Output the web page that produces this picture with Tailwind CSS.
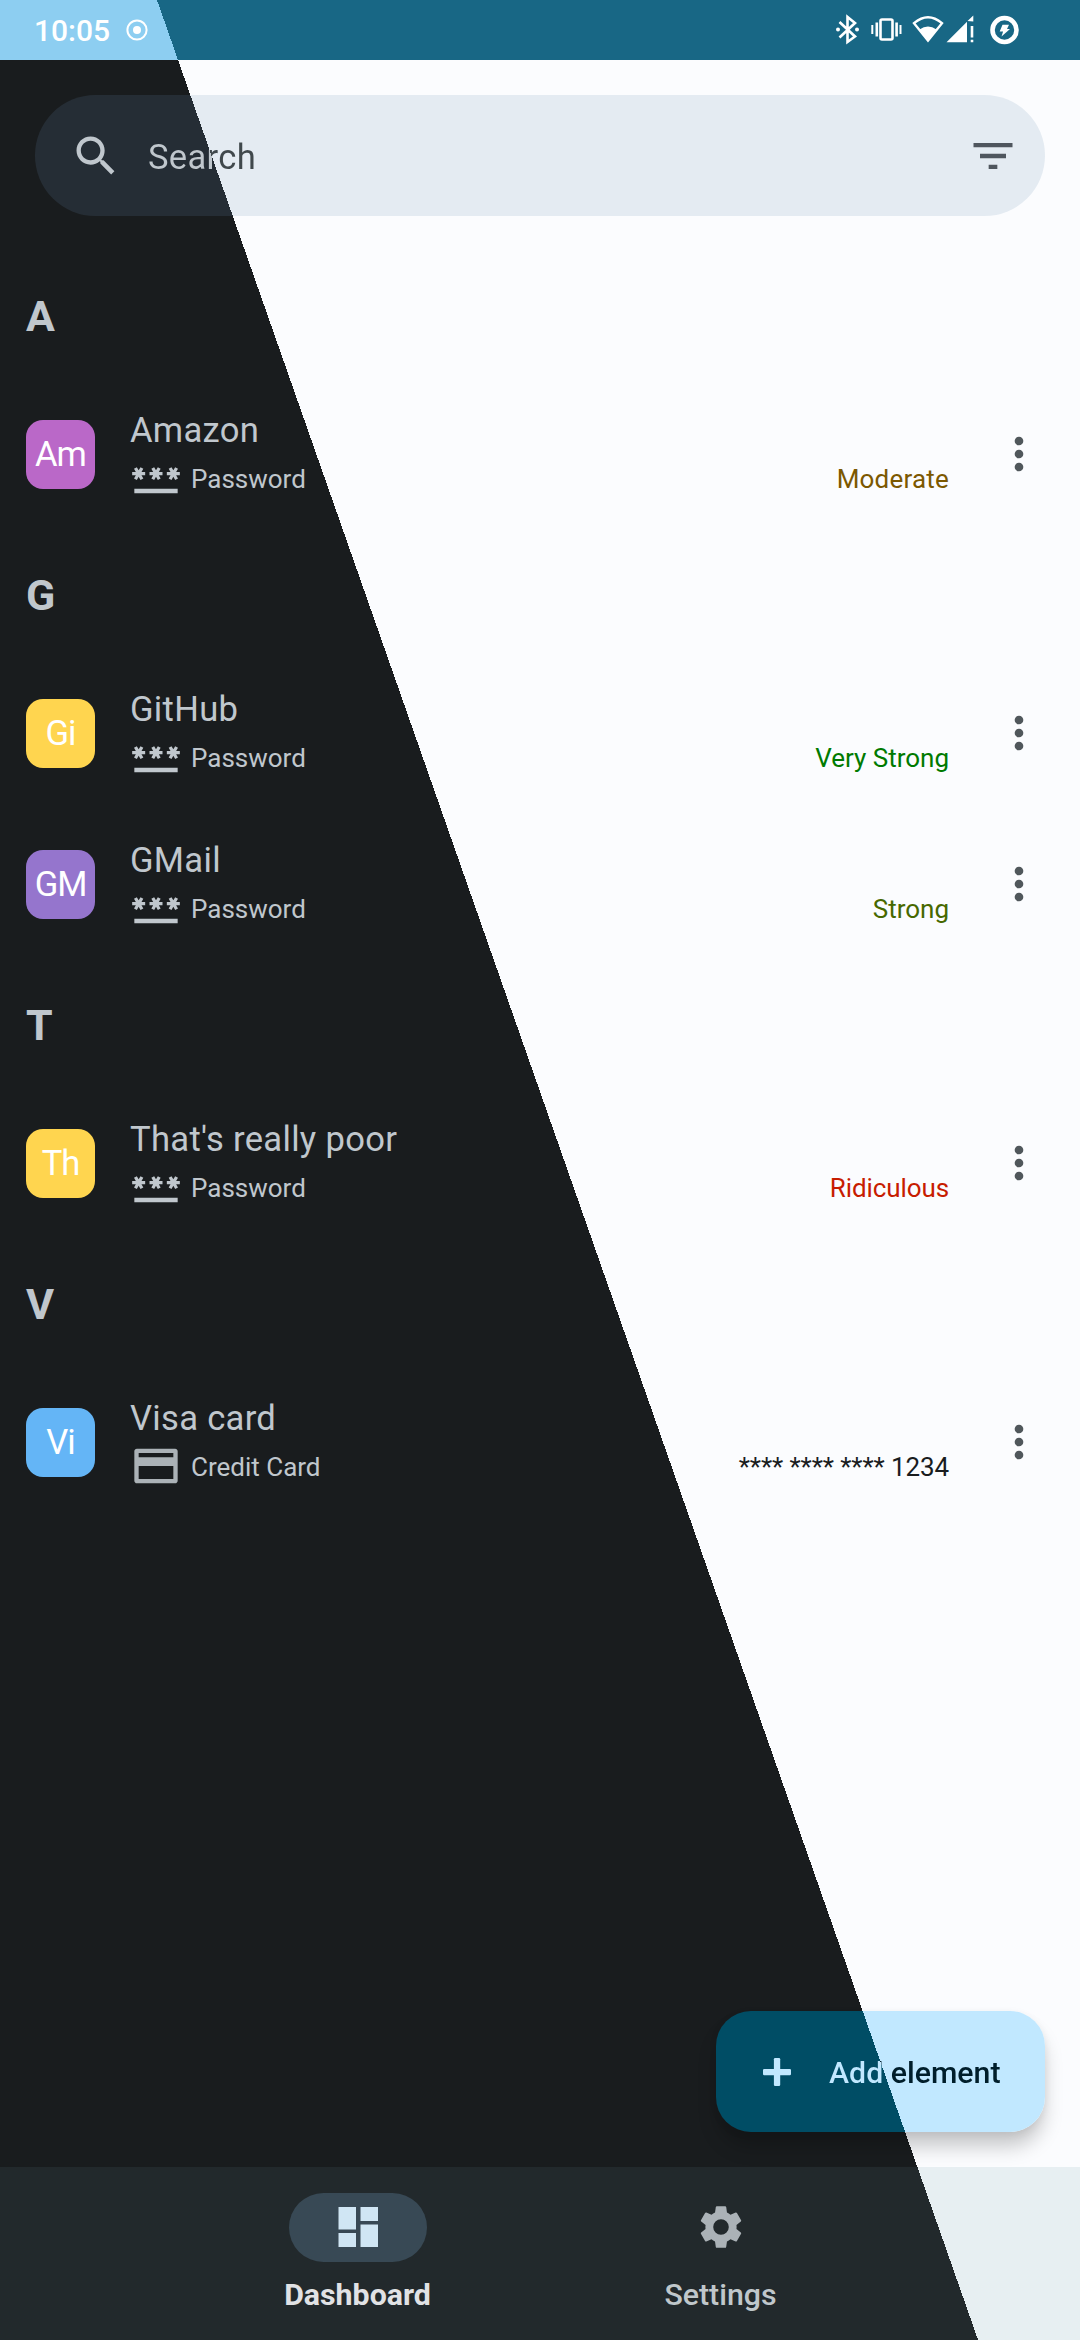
<!DOCTYPE html>
<html lang="en">
<head>
<meta charset="utf-8">
<title>Passwords</title>
<script src="https://cdn.jsdelivr.net/npm/@tailwindcss/browser@4"></script>
</head>
<body class="w-[1080px] h-[2340px] overflow-hidden font-['Roboto',sans-serif]">
<svg class="hidden">
  <symbol id="password" viewBox="0 0 24 24"><path d="M2,17h20v2H2V17z M3.15,12.95L4,11.47l0.85,1.48l1.3-0.75L5.3,10.72H7v-1.5H5.3l0.85-1.47L4.85,7L4,8.47L3.15,7l-1.3,0.75L2.7,9.22H1v1.5h1.7L1.85,12.2L3.15,12.95z M9.85,12.2l1.3,0.75L12,11.47l0.85,1.48l1.3-0.75l-0.85-1.48H15v-1.5h-1.7l0.85-1.47L12.85,7L12,8.47L11.15,7l-1.3,0.75l0.85,1.47H9v1.5h1.7L9.85,12.2z M23,9.22h-1.7l0.85-1.47L20.85,7L20,8.47L19.15,7l-1.3,0.75l0.85,1.47H17v1.5h1.7l-0.85,1.48l1.3,0.75L20,11.47l0.85,1.48l1.3-0.75l-0.85-1.48H23V9.22z"/></symbol>
  <symbol id="card" viewBox="0 0 24 24"><path d="M20.8 4H3.2C2.5 4 2 4.5 2 5.2V18.800c0 .7.5 1.200 1.200 1.200h17.600c.7 0 1.200-.5 1.200-1.200V5.200c0-.7-.5-1.200-1.200-1.200zM20 18H4v-6h16v6zm0-10H4V6h16v2z"/></symbol>
  <symbol id="more" viewBox="0 0 24 24"><circle cx="12" cy="6" r="2"/><circle cx="12" cy="12" r="2"/><circle cx="12" cy="18" r="2"/></symbol>
</svg>
<!-- Every split surface shares one viewport-fixed gradient, so the dark/light diagonal lines up everywhere. -->
<div class="flex flex-col w-full h-full bg-fixed bg-[linear-gradient(70.664deg,#191c1e_922.9px,#fbfcfe_922.9px)]">

  <header class="flex items-center h-[60px] shrink-0 pl-[34px] pr-[60px] text-white bg-fixed bg-[linear-gradient(70.664deg,#8dcef1_922.9px,#186785_922.9px)]">
    <span class="pt-px text-[30px] leading-[60px] font-medium">10:05</span>
    <svg class="w-[24px] h-[24px] ml-[15px]" viewBox="0 0 24 24"><circle cx="12" cy="12" r="9.600" fill="none" stroke="white" stroke-width="2"/><circle cx="12" cy="12" r="4" fill="white"/></svg>
    <svg class="w-[188px] h-[32px] ml-auto" viewBox="832 14 188 32" fill="white">
      <path d="M839.500 22L855 36.500L847.500 42V17L855 23L839.500 37.500" fill="none" stroke="white" stroke-width="2.600"/><circle cx="838" cy="29.500" r="2"/><circle cx="857" cy="29.500" r="2"/>
      <rect x="880.500" y="19.500" width="12" height="20" rx="1.500" fill="none" stroke="white" stroke-width="2.600"/>
      <path d="M871.300 25h2v9h-2zM875.500 22.500h2.600v14h-2.600zM895.300 22.500h2.600v14h-2.600zM899.500 25h2v9h-2z"/>
      <path d="M914 23.200Q928 11.200 942 23.200L928 40.600z" fill="none" stroke="white" stroke-width="2.400"/><path d="M919.500 29.500Q928 23.500 936.500 29.500L928 41z"/>
      <path d="M946.500 42.300L967 21.800V42.300zM967.500 21L973.300 15.500V21.500zM970.700 26h2.600v11.500h-2.600zM970.700 39.700h2.600v2.600h-2.600z"/>
      <circle cx="1004.500" cy="30" r="12" fill="none" stroke="white" stroke-width="4.600"/>
      <path d="M1002.500 24.800h6.500l-2 4.200h3l-8.500 7.500 1.600-5h-3.400z"/>
    </svg>
  </header>

  <div class="flex items-center h-[121px] shrink-0 mt-[35px] mx-[35px] pl-[35px] pr-[26px] rounded-full bg-fixed bg-[linear-gradient(70.664deg,#252d35_922.9px,#e4ebf2_922.9px)]">
    <svg class="w-[52px] h-[52px]" viewBox="0 0 24 24" fill="#c0c7cd"><path d="M15.500 14h-.790l-.280-.270C15.410 12.590 16 11.110 16 9.500 16 5.910 13.090 3 9.500 3S3 5.910 3 9.500 5.910 16 9.500 16c1.610 0 3.090-.590 4.230-1.570l.270.280v.790l5 4.990L20.490 19l-4.990-5zm-6 0C7.010 14 5 11.990 5 9.500S7.010 5 9.500 5 14 7.010 14 9.500 11.990 14 9.500 14z"/></svg>
    <span class="ml-[26px] pt-[2px] text-[34.6px] leading-[60px] tracking-[0.300px] text-transparent bg-clip-text bg-fixed bg-[linear-gradient(70.664deg,#c0c7cd_922.9px,#40484c_922.9px)]">Search</span>
    <svg class="w-[52px] h-[52px] ml-auto" viewBox="0 0 24 24" fill="#4f565e"><path d="M10 18h4v-2h-4v2zM3 6v2h18V6H3zm3 7h12v-2H6v2z"/></svg>
  </div>

  <main class="flex flex-col grow mt-[35px] pl-[26px] pr-[35px] text-[#c0c7cd]">
    <h2 class="flex items-center h-[128px] pt-[3px] text-[43px] font-bold">A</h2>
    <div class="flex items-center h-[151px]">
      <div class="flex items-center justify-center size-[69px] rounded-[17px] bg-[#ba68c8] text-white text-[34.600px] tracking-[-1px]">Am</div>
      <div class="flex flex-col ml-[35px]">
        <div class="h-[46px] pt-px text-[34.600px] leading-[46px] tracking-[0.300px]">Amazon</div>
        <div class="flex items-center h-[52px]"><svg class="size-[52px]" fill="currentColor"><use href="#password"/></svg><span class="ml-[9px] pt-[3px] text-[26px]">Password</span></div>
      </div>
      <div class="ml-auto mt-[48px] text-[26px] leading-[52px] tracking-[0.200px] text-[#7c5800]">Moderate</div>
      <svg class="size-[52px] ml-[44px] mb-[2px] text-[#50575b]" fill="currentColor"><use href="#more"/></svg>
    </div>

    <h2 class="flex items-center h-[128px] pt-[3px] text-[43px] font-bold">G</h2>
    <div class="flex items-center h-[151px]">
      <div class="flex items-center justify-center size-[69px] rounded-[17px] bg-[#ffd54f] text-white text-[34.600px] tracking-[-1px]">Gi</div>
      <div class="flex flex-col ml-[35px]">
        <div class="h-[46px] pt-px text-[34.600px] leading-[46px] tracking-[0.300px]">GitHub</div>
        <div class="flex items-center h-[52px]"><svg class="size-[52px]" fill="currentColor"><use href="#password"/></svg><span class="ml-[9px] pt-[3px] text-[26px]">Password</span></div>
      </div>
      <div class="ml-auto mt-[48px] text-[26px] leading-[52px] text-[#007a00]">Very Strong</div>
      <svg class="size-[52px] ml-[44px] mb-[2px] text-[#50575b]" fill="currentColor"><use href="#more"/></svg>
    </div>
    <div class="flex items-center h-[151px]">
      <div class="flex items-center justify-center size-[69px] rounded-[17px] bg-[#9575cd] text-white text-[34.600px] tracking-[-1px]">GM</div>
      <div class="flex flex-col ml-[35px]">
        <div class="h-[46px] pt-px text-[34.600px] leading-[46px] tracking-[0.300px]">GMail</div>
        <div class="flex items-center h-[52px]"><svg class="size-[52px]" fill="currentColor"><use href="#password"/></svg><span class="ml-[9px] pt-[3px] text-[26px]">Password</span></div>
      </div>
      <div class="ml-auto mt-[48px] text-[26px] leading-[52px] text-[#476800]">Strong</div>
      <svg class="size-[52px] ml-[44px] mb-[2px] text-[#50575b]" fill="currentColor"><use href="#more"/></svg>
    </div>

    <h2 class="flex items-center h-[128px] pt-[3px] text-[43px] font-bold">T</h2>
    <div class="flex items-center h-[151px]">
      <div class="flex items-center justify-center size-[69px] rounded-[17px] bg-[#ffd54f] text-white text-[34.600px] tracking-[-1px]">Th</div>
      <div class="flex flex-col ml-[35px]">
        <div class="h-[46px] pt-px text-[34.600px] leading-[46px] tracking-[0.300px]">That's really poor</div>
        <div class="flex items-center h-[52px]"><svg class="size-[52px]" fill="currentColor"><use href="#password"/></svg><span class="ml-[9px] pt-[3px] text-[26px]">Password</span></div>
      </div>
      <div class="ml-auto mt-[48px] text-[26px] leading-[52px] tracking-[-0.100px] text-[#c71c00]">Ridiculous</div>
      <svg class="size-[52px] ml-[44px] mb-[2px] text-[#50575b]" fill="currentColor"><use href="#more"/></svg>
    </div>

    <h2 class="flex items-center h-[128px] pt-[3px] text-[43px] font-bold">V</h2>
    <div class="flex items-center h-[151px]">
      <div class="flex items-center justify-center size-[69px] rounded-[17px] bg-[#64b5f6] text-white text-[34.600px] tracking-[-1px]">Vi</div>
      <div class="flex flex-col ml-[35px]">
        <div class="h-[46px] pt-px text-[34.600px] leading-[46px] tracking-[0.300px]">Visa card</div>
        <div class="flex items-center h-[52px]"><svg class="size-[52px] text-[#abb2b7]" fill="currentColor"><use href="#card"/></svg><span class="ml-[9px] pt-[3px] text-[26px]">Credit Card</span></div>
      </div>
      <div class="ml-auto mt-[48px] text-[26px] leading-[52px] tracking-[-0.100px] text-[#191c1e]">**** **** **** 1234</div>
      <svg class="size-[52px] ml-[44px] mb-[2px] text-[#50575b]" fill="currentColor"><use href="#more"/></svg>
    </div>

    <button class="flex items-center self-end w-[329px] h-[121px] mt-auto mb-[35px] pl-[47px] rounded-[35px] shadow-[0_16px_20px_-2px_rgb(0_0_0/0.22),0_2px_8px_rgb(0_0_0/0.06)] bg-fixed bg-[linear-gradient(70.664deg,#004d65_922.9px,#c1e8ff_922.9px)]">
      <svg class="size-[28px]" viewBox="0 0 28 28" fill="#c1e8ff"><rect x="10.900" y="0" width="6.300" height="28" rx="1.200"/><rect x="0" y="10.900" width="28" height="6.300" rx="1.200"/></svg>
      <span class="ml-[38px] pt-[2px] text-[30.300px] leading-[52px] font-medium text-transparent bg-clip-text bg-fixed bg-[linear-gradient(70.664deg,#c1e8ff_922.9px,#001e2b_922.9px)]">Add element</span>
    </button>
  </main>

  <nav class="flex h-[173px] shrink-0 pt-[26px] pl-[176px] bg-fixed bg-[linear-gradient(70.664deg,#22292c_922.9px,#e7eff2_922.9px)]">
    <div class="flex flex-col items-center w-[363px]">
      <div class="flex items-center justify-center w-[138px] h-[69px] rounded-full bg-[#384955]">
        <svg class="w-[40px] h-[40px] mb-px" viewBox="0 0 40 40" fill="#d0e6f4"><path d="M.5 0h17.500v22.500H.5zM22.500 0h17.500v14H22.500zM.5 26h17.500v14H.5zM22.500 17.500h17.500V40H22.500z"/></svg>
      </div>
      <span class="mt-[15px] text-[30.300px] leading-[36px] font-bold text-[#e1e2e5]">Dashboard</span>
    </div>
    <div class="flex flex-col items-center w-[363px]">
      <div class="flex items-center justify-center w-[138px] h-[69px]">
        <svg class="size-[52px] mb-px" viewBox="0 0 24 24" fill="#abb2b7"><path d="M19.140 12.940c.040-.3.060-.610.060-.940 0-.320-.020-.640-.070-.940l2.030-1.580c.180-.140.230-.410.120-.610l-1.920-3.320c-.120-.220-.370-.290-.590-.220l-2.390.960c-.5-.380-1.030-.7-1.620-.940l-.360-2.540c-.040-.240-.240-.410-.480-.410h-3.840c-.240 0-.430.170-.470.410l-.360 2.540c-.590.240-1.130.570-1.620.940l-2.390-.960c-.220-.080-.470 0-.590.220L2.740 8.870c-.120.210-.080.470.120.610l2.030 1.580c-.050.3-.090.630-.090.940s.020.640.070.940l-2.030 1.580c-.180.140-.230.410-.120.610l1.920 3.320c.120.220.370.290.590.220l2.390-.960c.5.380 1.030.7 1.620.940l.360 2.540c.050.240.240.410.480.410h3.840c.240 0 .440-.170.470-.410l.360-2.540c.590-.240 1.130-.560 1.620-.940l2.390.960c.220.080.470 0 .590-.220l1.920-3.320c.120-.220.070-.470-.120-.610l-2.010-1.580zM12 15.600a3.600 3.600 0 1 1 0-7.200 3.600 3.600 0 0 1 0 7.200z"/></svg>
      </div>
      <span class="mt-[15px] text-[30.300px] leading-[36px] font-medium text-[#c0c7cb]">Settings</span>
    </div>
  </nav>
</div>
</body>
</html>
